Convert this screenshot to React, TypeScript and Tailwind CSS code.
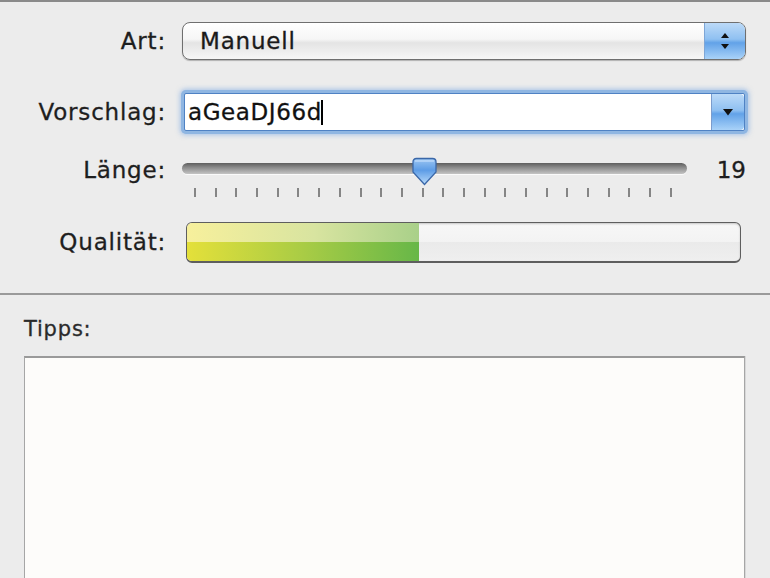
const font = { fontFamily: '"DejaVu Sans", "Liberation Sans", sans-serif' };

function StepperArrows() {
  return (
    <svg width="12" height="18" viewBox="0 0 12 18">
      <path d="M6 1 L10 6 H2 Z" fill="#111" />
      <path d="M2 12 H10 L6 17 Z" fill="#111" />
    </svg>
  );
}

function DownArrow() {
  return (
    <svg width="12" height="8" viewBox="0 0 12 8">
      <path d="M1 1 H11 L6 7.5 Z" fill="#111" />
    </svg>
  );
}

function Knob() {
  return (
    <svg width="27" height="30" viewBox="0 0 27 30">
      <defs>
        <linearGradient id="knob" x1="0" y1="0" x2="0" y2="1">
          <stop offset="0" stopColor="#9cc6f2" />
          <stop offset="0.45" stopColor="#5d9ce6" />
          <stop offset="1" stopColor="#b9dbfa" />
        </linearGradient>
      </defs>
      <path
        d="M2 5 Q2 1.5 5.5 1.5 H21.5 Q25 1.5 25 5 V15 L13.5 27.5 L2 15 Z"
        fill="url(#knob)"
        stroke="#3a67a8"
        strokeWidth="1.3"
      />
      <path d="M4 4 H23" stroke="#d6eaff" strokeWidth="1.2" opacity="0.8" />
    </svg>
  );
}

function Label({ children }: { children: React.ReactNode }) {
  return (
    <div className="w-[166px] shrink-0 text-right text-[23px] tracking-[0.8px] text-[#1e1e1e] [-webkit-text-stroke:0.3px_#1e1e1e]">
      {children}
    </div>
  );
}

export default function App() {
  const ticks = Array.from({ length: 24 }, (_, i) => i);

  return (
    <div
      className="w-[770px] h-[578px] overflow-hidden bg-[#ececec] border-t-2 border-[#8a8a8a]"
      style={font}
    >
      <div className="pt-[20px]">
        {/* Art */}
        <div className="flex items-center h-[38px]">
          <Label>Art:</Label>
          <div className="ml-[16px] w-[564px] h-[38px] flex rounded-[8px] border border-[#6f6f6f] overflow-hidden bg-[linear-gradient(#ffffff,#f6f6f6_45%,#e4e4e4_55%,#f7f7f7)] shadow-[0_1px_1px_rgba(0,0,0,0.25)]">
            <div className="flex-1 flex items-center pl-[17px] text-[23px] tracking-[0.8px] text-[#1a1a1a] [-webkit-text-stroke:0.3px_#1a1a1a]">
              Manuell
            </div>
            <div className="w-[41px] flex items-center justify-center border-l border-[#7ea6d6] bg-[linear-gradient(#bcdaf8,#8fc0f1_45%,#62a2e8_55%,#a9d2f8)]">
              <StepperArrows />
            </div>
          </div>
        </div>

        {/* Vorschlag */}
        <div className="flex items-center h-[38px] mt-[33px]">
          <Label>Vorschlag:</Label>
          <div className="ml-[18px] w-[561px] h-[38px] flex border border-[#4f82c4] bg-white shadow-[0_0_0_3px_#8fb6e2,0_0_5px_4px_rgba(110,160,225,0.55)] rounded-[2px]">
            <div className="flex-1 flex items-center pl-[3px] text-[23px] tracking-[0.6px] text-[#111] [-webkit-text-stroke:0.3px_#111]">
              aGeaDJ66d
              <span className="inline-block w-[2px] h-[25px] bg-black -ml-[1px]" />
            </div>
            <div className="w-[33px] flex items-center justify-center border-l border-[#7c9ccc] bg-[linear-gradient(#bcdaf8,#8fc0f1_45%,#62a2e8_55%,#a9d2f8)] rounded-r-[4px]">
              <DownArrow />
            </div>
          </div>
        </div>

        {/* Länge */}
        <div className="flex h-[50px] mt-[19px]">
          <div className="pt-[3px]">
            <Label>Länge:</Label>
          </div>
          <div className="ml-[16px] w-[505px] relative">
            <div className="mt-[13px] h-[11px] rounded-full bg-[linear-gradient(#5e5e5e,#8a8a8a_40%,#c4c4c4)] shadow-[0_1px_0_#fafafa]" />
            <div className="absolute left-[229px] top-[7px]">
              <Knob />
            </div>
            <div className="mt-[14px] ml-[12px] w-[478px] h-[10px] flex justify-between">
              {ticks.map((i) => (
                <div key={i} className="w-[2px] h-[9px] bg-[#858585]" />
              ))}
            </div>
          </div>
          <div className="flex-1 pt-[3px] pr-[24px] text-right text-[23px] text-[#1e1e1e] [-webkit-text-stroke:0.3px_#1e1e1e]">
            19
          </div>
        </div>

        {/* Qualität */}
        <div className="flex items-center h-[41px] mt-[22px]">
          <Label>Qualität:</Label>
          <div className="ml-[20px] w-[555px] h-[41px] rounded-[6px] border border-[#5e5e5e] border-b-2 overflow-hidden flex flex-col bg-[linear-gradient(#f7f7f7,#f3f3f3_50%,#eaeaea_50%,#efefef)] shadow-[inset_0_1px_2px_rgba(0,0,0,0.2)]">
            <div className="w-[232px] h-1/2 bg-[linear-gradient(90deg,#f7f09c,#d8e4a0_55%,#a9d089)]" />
            <div className="w-[232px] h-1/2 bg-[linear-gradient(90deg,#e4e03a,#a9cc45_50%,#67b748)]" />
          </div>
        </div>

        <div className="mt-[30px] h-[2px] bg-[#9a9a9a]" />

        {/* Tipps */}
        <div className="pl-[24px] pt-[22px] text-[21px] tracking-[0.8px] text-[#2a2a2a] leading-[24px] [-webkit-text-stroke:0.3px_#2a2a2a]">
          Tipps:
        </div>
        <div className="ml-[24px] mt-[15px] w-[721px] h-[240px] bg-[#fdfcfa] border border-[#a6a6a6] border-t-2 border-t-[#9a9a9a] shadow-[1px_0_0_#d8d8d8]" />
      </div>
    </div>
  );
}
